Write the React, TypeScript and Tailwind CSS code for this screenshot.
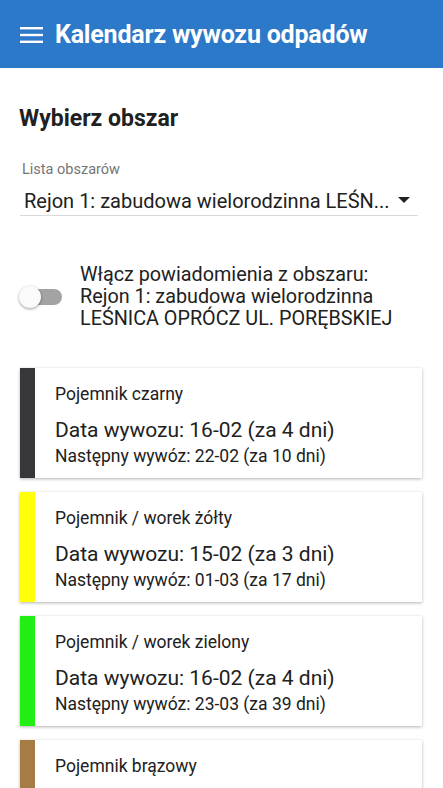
import React from 'react';

const bins = [
  { name: 'Pojemnik czarny', color: 'bg-[#37373b]', date: '16-02 (za 4 dni)', next: '22-02 (za 10 dni)' },
  { name: 'Pojemnik / worek żółty', color: 'bg-[#ffff0a]', date: '15-02 (za 3 dni)', next: '01-03 (za 17 dni)' },
  { name: 'Pojemnik / worek zielony', color: 'bg-[#22ee14]', date: '16-02 (za 4 dni)', next: '23-03 (za 39 dni)' },
  { name: 'Pojemnik brązowy', color: 'bg-[#a67c45]', date: '16-02 (za 4 dni)', next: '23-02 (za 11 dni)' },
];

export default function App() {
  return (
    <div className="w-[443px] h-[788px] overflow-hidden bg-white font-['Roboto',sans-serif] text-[#212121]">
      {/* Header */}
      <header className="h-[68px] bg-[#2c78c9] flex items-center px-5 gap-3">
        <svg width="23" height="16" viewBox="0 0 23 16" className="mt-[2px]">
          <rect x="0" y="0" width="23" height="2.4" fill="white" />
          <rect x="0" y="6.8" width="23" height="2.4" fill="white" />
          <rect x="0" y="13.6" width="23" height="2.4" fill="white" />
        </svg>
        <h1 className="text-white text-[25px] font-bold tracking-[-0.2px] mt-[2px]">Kalendarz wywozu odpadów</h1>
      </header>

      <main className="pl-5 pr-[21px]">
        <h2 className="mt-[37px] text-[23px] font-bold leading-[28px] -ml-px">Wybierz obszar</h2>

        {/* Select */}
        <div className="mt-[28px] mr-[4px]">
          <div className="pl-[2px] text-[14.5px] leading-[18px] text-[#757575]">Lista obszarów</div>
          <div className="mt-[10px] flex items-center justify-between border-b border-[#d9d9d9] pl-1 pr-2 pb-[2px]">
            <span className="text-[20px] leading-[24px]">Rejon 1: zabudowa wielorodzinna LEŚN...</span>
            <svg width="12" height="6" viewBox="0 0 12 6" className="mb-[2px]">
              <path d="M0 0 L12 0 L6 6 Z" fill="#222" />
            </svg>
          </div>
        </div>

        {/* Notification switch */}
        <div className="mt-[48px] flex items-center">
          <div className="relative w-[42px] h-[22px] flex items-center shrink-0">
            <div className="ml-[6px] w-[36px] h-[16px] rounded-full bg-[#a3a3a3]" />
            <div className="absolute -left-px top-0 w-[22px] h-[22px] rounded-full bg-[#fafafa] shadow-[0_1px_3px_rgba(0,0,0,0.4)]" />
          </div>
          <p className="ml-[18px] text-[19.8px] leading-[22px]">
            Włącz powiadomienia z obszaru:
            <br />
            Rejon 1: zabudowa wielorodzinna
            <br />
            LEŚNICA OPRÓCZ UL. PORĘBSKIEJ
          </p>
        </div>

        {/* Cards */}
        <div className="mt-[38px] flex flex-col gap-[14px]">
          {bins.map((b) => (
            <div
              key={b.name}
              className="h-[110px] flex bg-white shadow-[0_1px_3px_rgba(0,0,0,0.3)]"
            >
              <div className={`w-[15px] shrink-0 ${b.color}`} />
              <div className="pl-5 pt-[16px]">
                <div className="text-[17.5px] leading-[20px]">{b.name}</div>
                <div className="mt-[14px] text-[21px] leading-[24px]">Data wywozu: {b.date}</div>
                <div className="mt-[4px] text-[17.5px] leading-[20px]">Następny wywóz: {b.next}</div>
              </div>
            </div>
          ))}
        </div>
      </main>
    </div>
  );
}
